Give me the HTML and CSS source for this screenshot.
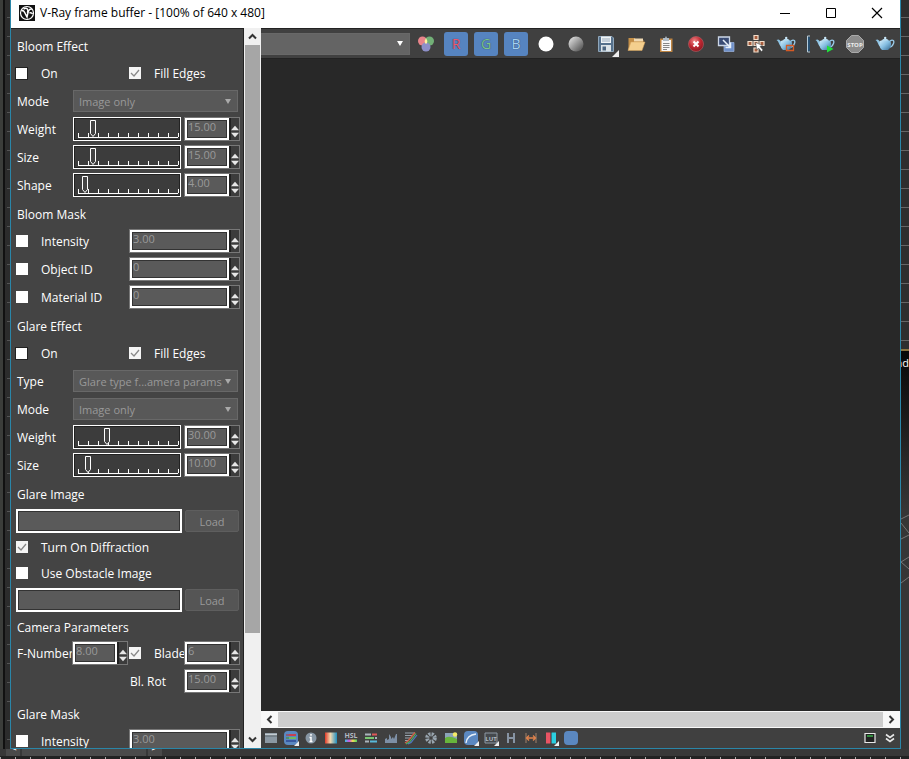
FILE: index.html
```
<!DOCTYPE html>
<html lang="en">
<head>
    <meta charset="UTF-8">
    <meta name="viewport" content="width=device-width, initial-scale=1.0">
    <title>V-Ray frame buffer</title>
    <link rel="stylesheet" href="styles.css">
</head>
<body>
    <!-- Shared symbols -->
    <svg class="symbols" aria-hidden="true">
        <defs>
            <linearGradient id="pot" x1="0" y1="0" x2="1" y2="1">
                <stop offset="0" stop-color="#d8f0fc"/>
                <stop offset="0.5" stop-color="#86bfe2"/>
                <stop offset="1" stop-color="#35688f"/>
            </linearGradient>
            <linearGradient id="ball" x1="0" y1="0" x2="1" y2="1">
                <stop offset="0.2" stop-color="#666"/>
                <stop offset="0.5" stop-color="#999"/>
                <stop offset="1" stop-color="#eee"/>
            </linearGradient>
            <linearGradient id="heat">
                <stop offset="0" stop-color="#e03a28"/>
                <stop offset="0.45" stop-color="#f0d8b0"/>
                <stop offset="1" stop-color="#1f8fc0"/>
            </linearGradient>
            <linearGradient id="rainbow">
                <stop offset="0" stop-color="#30c8e0"/>
                <stop offset="0.35" stop-color="#d050e0"/>
                <stop offset="0.65" stop-color="#f0e050"/>
                <stop offset="1" stop-color="#50d060"/>
            </linearGradient>
            <radialGradient id="redball" cx="0.4" cy="0.3" r="0.8">
                <stop offset="0" stop-color="#e88"/>
                <stop offset="0.5" stop-color="#c02832"/>
                <stop offset="1" stop-color="#7c141c"/>
            </radialGradient>
        </defs>
        <symbol id="teapot" viewBox="0 0 20 16">
            <path d="M15 5c3-2 4.500 0 3.500 2.500S15.500 11 14.500 11" fill="none" stroke="#9accea" stroke-width="1.300"/>
            <path d="M6 10.500C3 10.500 3.500 6 0.500 4L2.500 3.500C5 4.500 5 6.500 6.500 6.500z" fill="#8fc4e4"/>
            <path d="M5 5Q10 2.500 15.500 5Q17.500 11 13 14h-6Q3 11 5 5z" fill="url(#pot)"/>
            <path d="M7 4Q10 1.500 13.500 4Q10 5.500 7 4z" fill="#b8dcf0"/>
            <circle cx="10.200" cy="2" r="1.200" fill="#c8e6f6"/>
        </symbol>
        <symbol id="up" viewBox="0 0 9 6"><path d="M0 5.500L4.500 0.500L9 5.500z" fill="#e6e6e6"/></symbol>
        <symbol id="down" viewBox="0 0 9 6"><path d="M0 0.500L4.500 5.500L9 0.500z" fill="#e6e6e6"/></symbol>
        <symbol id="chevron" viewBox="0 0 9 9"><path d="M1 6.500L4.500 3L8 6.500" fill="none" stroke="#333" stroke-width="2"/></symbol>
    </svg>

    <div class="backdrop-left"></div>

    <main class="window">
        <header class="titlebar">
            <svg class="app-icon" viewBox="0 0 16 16">
                <rect width="16" height="16" fill="#111"/>
                <circle cx="8" cy="8" r="6.500" fill="none" stroke="#fff" stroke-width="1.200"/>
                <path d="M2.500 6C4.500 4.500 5.500 7 8 12C9 7 9.500 3.500 13 4M4.500 4C8 2 9.500 4 8.500 8M10.500 8C12 7.500 13 8 13.500 9" fill="none" stroke="#fff" stroke-width="1.500"/>
            </svg>
            <h1>V-Ray frame buffer - [100% of 640 x 480]</h1>
            <div class="window-buttons">
                <button aria-label="Minimize"><svg viewBox="0 0 12 12"><path d="M1 6.500h10" stroke="#000"/></svg></button>
                <button aria-label="Maximize"><svg viewBox="0 0 12 12"><path d="M1.500 1.500h9v9h-9z" fill="none" stroke="#000"/></svg></button>
                <button aria-label="Close"><svg viewBox="0 0 12 12"><path d="M1 1l10 10M11 1L1 11" stroke="#000" stroke-width="1.200"/></svg></button>
            </div>
        </header>

        <div class="content">
            <aside class="settings">
                <h2>Bloom Effect</h2>
                <div class="row checks">
                    <input type="checkbox" id="bloom-on" class="small"><label for="bloom-on">On</label>
                    <input type="checkbox" id="bloom-fill" checked><label for="bloom-fill">Fill Edges</label>
                </div>
                <div class="row">
                    <label for="bloom-mode">Mode</label>
                    <select id="bloom-mode" disabled><option>Image only</option></select>
                </div>
                <div class="row">
                    <label for="bloom-weight">Weight</label>
                    <input type="range" aria-label="Weight slider" value="15">
                    <div class="spin"><input type="text" id="bloom-weight" value="15.00"><div class="arrows"><button aria-label="Up"><svg><use href="#up"/></svg></button><button aria-label="Down"><svg><use href="#down"/></svg></button></div></div>
                </div>
                <div class="row">
                    <label for="bloom-size">Size</label>
                    <input type="range" aria-label="Size slider" value="15">
                    <div class="spin"><input type="text" id="bloom-size" value="15.00"><div class="arrows"><button aria-label="Up"><svg><use href="#up"/></svg></button><button aria-label="Down"><svg><use href="#down"/></svg></button></div></div>
                </div>
                <div class="row">
                    <label for="bloom-shape">Shape</label>
                    <input type="range" aria-label="Shape slider" value="7">
                    <div class="spin"><input type="text" id="bloom-shape" value="4.00"><div class="arrows"><button aria-label="Up"><svg><use href="#up"/></svg></button><button aria-label="Down"><svg><use href="#down"/></svg></button></div></div>
                </div>

                <h2>Bloom Mask</h2>
                <div class="row mask">
                    <input type="checkbox" id="bm-int"><label for="bm-int">Intensity</label>
                    <div class="spin"><input type="text" aria-label="Intensity" value="3.00"><div class="arrows"><button aria-label="Up"><svg><use href="#up"/></svg></button><button aria-label="Down"><svg><use href="#down"/></svg></button></div></div>
                </div>
                <div class="row mask">
                    <input type="checkbox" id="bm-obj"><label for="bm-obj">Object ID</label>
                    <div class="spin"><input type="text" aria-label="Object ID" value="0"><div class="arrows"><button aria-label="Up"><svg><use href="#up"/></svg></button><button aria-label="Down"><svg><use href="#down"/></svg></button></div></div>
                </div>
                <div class="row mask">
                    <input type="checkbox" id="bm-mat"><label for="bm-mat">Material ID</label>
                    <div class="spin"><input type="text" aria-label="Material ID" value="0"><div class="arrows"><button aria-label="Up"><svg><use href="#up"/></svg></button><button aria-label="Down"><svg><use href="#down"/></svg></button></div></div>
                </div>

                <h2>Glare Effect</h2>
                <div class="row checks">
                    <input type="checkbox" id="glare-on" class="small"><label for="glare-on">On</label>
                    <input type="checkbox" id="glare-fill" checked><label for="glare-fill">Fill Edges</label>
                </div>
                <div class="row">
                    <label for="glare-type">Type</label>
                    <select id="glare-type" disabled><option>Glare type f...amera params</option></select>
                </div>
                <div class="row">
                    <label for="glare-mode">Mode</label>
                    <select id="glare-mode" disabled><option>Image only</option></select>
                </div>
                <div class="row">
                    <label for="glare-weight">Weight</label>
                    <input type="range" aria-label="Weight slider" value="30">
                    <div class="spin"><input type="text" id="glare-weight" value="30.00"><div class="arrows"><button aria-label="Up"><svg><use href="#up"/></svg></button><button aria-label="Down"><svg><use href="#down"/></svg></button></div></div>
                </div>
                <div class="row">
                    <label for="glare-size">Size</label>
                    <input type="range" aria-label="Size slider" value="10">
                    <div class="spin"><input type="text" id="glare-size" value="10.00"><div class="arrows"><button aria-label="Up"><svg><use href="#up"/></svg></button><button aria-label="Down"><svg><use href="#down"/></svg></button></div></div>
                </div>

                <h2>Glare Image</h2>
                <div class="row file">
                    <input type="text" aria-label="Glare image file">
                    <button class="load" disabled>Load</button>
                </div>
                <div class="row option">
                    <input type="checkbox" id="diffraction" checked><label for="diffraction">Turn On Diffraction</label>
                </div>
                <div class="row option">
                    <input type="checkbox" id="obstacle"><label for="obstacle">Use Obstacle Image</label>
                </div>
                <div class="row file">
                    <input type="text" aria-label="Obstacle image file">
                    <button class="load" disabled>Load</button>
                </div>

                <h2 class="camera">Camera Parameters</h2>
                <div class="row aperture">
                    <label for="fnumber">F-Number</label>
                    <div class="spin"><input type="text" id="fnumber" value="8.00"><div class="arrows"><button aria-label="Up"><svg><use href="#up"/></svg></button><button aria-label="Down"><svg><use href="#down"/></svg></button></div></div>
                    <div class="blade">
                        <input type="checkbox" id="blade" checked><label for="blade">Blade</label>
                    </div>
                    <div class="spin"><input type="text" aria-label="Blades" value="6"><div class="arrows"><button aria-label="Up"><svg><use href="#up"/></svg></button><button aria-label="Down"><svg><use href="#down"/></svg></button></div></div>
                </div>
                <div class="row rotation">
                    <label for="blrot">Bl. Rot</label>
                    <div class="spin"><input type="text" id="blrot" value="15.00"><div class="arrows"><button aria-label="Up"><svg><use href="#up"/></svg></button><button aria-label="Down"><svg><use href="#down"/></svg></button></div></div>
                </div>

                <h2 class="glare-mask">Glare Mask</h2>
                <div class="row mask">
                    <input type="checkbox" id="gm-int"><label for="gm-int">Intensity</label>
                    <div class="spin"><input type="text" aria-label="Intensity" value="3.00"><div class="arrows"><button aria-label="Up"><svg><use href="#up"/></svg></button><button aria-label="Down"><svg><use href="#down"/></svg></button></div></div>
                </div>
            </aside>

            <div class="vscroll">
                <button aria-label="Scroll up"><svg><use href="#chevron"/></svg></button>
                <div class="thumb"></div>
                <div class="rest"></div>
                <button class="flip" aria-label="Scroll down"><svg><use href="#chevron"/></svg></button>
            </div>

            <section class="viewer">
                <div class="toolbar">
                    <select aria-label="Channel"><option></option></select>
                    <button aria-label="RGB channels"><svg viewBox="0 0 20 20"><circle cx="6.500" cy="7" r="4.500" fill="#e8848a"/><circle cx="13.500" cy="7" r="4.500" fill="#72b077"/><circle cx="10" cy="13" r="4.500" fill="#8d8fc8"/><path d="M10 4q2 3 1 5l-1 1-1-1q-1-2 1-5z" fill="#fff2a0"/></svg></button>
                    <button class="channel red">R</button>
                    <button class="channel green">G</button>
                    <button class="channel blue">B</button>
                    <button aria-label="Alpha"><svg viewBox="0 0 20 20"><circle cx="10" cy="10" r="7.500" fill="#fff"/></svg></button>
                    <button aria-label="Mono"><svg viewBox="0 0 20 20"><circle cx="10" cy="10" r="7.500" fill="url(#ball)" transform="rotate(180 10 10)"/></svg></button>
                    <button class="more" aria-label="Save"><svg viewBox="0 0 20 20"><path d="M2.500 2.500h13.500l1.500 1.500v13.500h-15z" fill="#56718c" stroke="#8fa6ba"/><path d="M5 2.500h10v6.500H5z" fill="#f0f4f6"/><path d="M5 11h10v6.500H5z" fill="#dde4e8"/><path d="M6.500 12.500h3.500v4H6.500z" fill="#4d6680"/><path d="M6 5h8M6 7h8" stroke="#9ab"/></svg></button>
                    <button aria-label="Open"><svg viewBox="0 0 20 20"><path d="M2.500 16V4h6l2 2h7v4" fill="#c48f48"/><path d="M8 4.500h9v3H8z" fill="#f0dab4"/><path d="M2 16.500L5 8h14l-3 8.500z" fill="#f4cf8e" stroke="#d8a45c" stroke-width="0.500"/></svg></button>
                    <button aria-label="Copy"><svg viewBox="0 0 20 20"><path d="M4 4.500h12.500V18H4z" fill="#bd8443"/><path d="M5.500 6h9.500v11H5.500z" fill="#f8f8f8"/><path d="M7 4h2l1-2 1 2h2v3H7z" fill="#aebbc6"/><path d="M7 9.500h6.500M7 11.500h6.500M7 13.500h6.500M7 15.500h4" stroke="#888"/></svg></button>
                    <button aria-label="Clear"><svg viewBox="0 0 20 20"><circle cx="10" cy="10" r="7.500" fill="url(#redball)" stroke="#c86a70" stroke-width="0.500"/><path d="M7.500 7.500l5 5M12.500 7.500l-5 5" stroke="#fff" stroke-width="2"/></svg></button>
                    <button aria-label="Duplicate"><svg viewBox="0 0 20 20"><path d="M8 8.500h10v9H8z" fill="#6f90c8" stroke="#9db4dc" stroke-width="0.700"/><path d="M2.500 3h11v8.500h-11z" fill="#3a4c74" stroke="#cbd6e6" stroke-width="1.300"/><path d="M7 6l7 7M14.500 8.500v5h-5" fill="none" stroke="#e8f0fa" stroke-width="1.500"/></svg></button>
                    <button aria-label="Track mouse"><svg viewBox="0 0 20 20"><g fill="#a85c3c" stroke="#f2ddca" stroke-width="1.200"><path d="M8 1.500h4v4H8zM8 7.500h4v4H8zM8 14h4v4H8zM2 7.500h4v4H2zM14 7.500h4v4h-4z"/></g><path d="M9.500 8.500l7 3-2.500 1 3 3.500-1.500 1.500-3-3.500-1.500 2z" fill="#fff" stroke="#444" stroke-width="0.500"/></svg></button>
                    <button aria-label="Region render"><svg viewBox="0 0 20 20"><use href="#teapot" x="0" y="2" width="20" height="16"/><path d="M10.500 11.500h7v5h-7z" fill="none" stroke="#d65a24" stroke-width="1.300"/></svg></button>
                    <svg class="divider" viewBox="0 0 9 20"><path d="M9 2H6.500v16H9" fill="none" stroke="#b4ccdc"/><path d="M8 3v14" stroke="#284f70" stroke-width="2"/></svg>
                    <button aria-label="Render last"><svg viewBox="0 0 20 20"><use href="#teapot" x="0" y="2" width="20" height="16"/><path d="M12 11.500l6.500 3.500-6.500 3.500z" fill="#1fe03c"/></svg></button>
                    <button aria-label="Stop"><svg viewBox="0 0 20 20"><path d="M6.500 1.500h7l5 5v7l-5 5h-7l-5-5v-7z" fill="#8c8c8c" stroke="#aaa"/><text x="10" y="12.500" class="stop-text">STOP</text></svg></button>
                    <button aria-label="Render"><svg viewBox="0 0 20 20"><use href="#teapot" x="0" y="2" width="20" height="16"/></svg></button>
                </div>

                <div class="canvas"></div>

                <div class="hscroll">
                    <button class="left" aria-label="Scroll left"><svg><use href="#chevron"/></svg></button>
                    <div class="thumb"></div>
                    <button class="right" aria-label="Scroll right"><svg><use href="#chevron"/></svg></button>
                </div>

                <div class="statusbar">
                    <button aria-label="Corrections panel"><svg viewBox="0 0 16 16"><path d="M2 3h12v10H2z" fill="#8b98a3"/><path d="M2 4.500h12" stroke="#c4ccd2" stroke-width="1.500"/><path d="M2 6h12" stroke="#5c666e"/></svg></button>
                    <button class="more" aria-label="Force color clamping"><svg viewBox="0 0 16 16"><rect x="1" y="1" width="14" height="14" rx="4" fill="#5b88c0"/><path d="M3 5h4" stroke="#8a5a78" stroke-width="2"/><path d="M3 8h4" stroke="#508a70" stroke-width="2"/><path d="M3 11h4" stroke="#3858a0" stroke-width="2"/><path d="M6 5h7" stroke="#c84050" stroke-width="2"/><path d="M6 8h7" stroke="#70b860" stroke-width="2"/><path d="M6 11h7" stroke="#3858a0" stroke-width="2"/></svg></button>
                    <button aria-label="Pixel info"><svg viewBox="0 0 16 16"><circle cx="8" cy="8" r="5.500" fill="#8796a4"/><path d="M8 4v1.800M6.500 7.500H8v4M6.500 11.500h3" stroke="#fff" stroke-width="1.500" fill="none"/></svg></button>
                    <button aria-label="White balance"><svg viewBox="0 0 16 16"><path d="M2 2.500h12v11H2z" fill="url(#heat)"/></svg></button>
                    <button aria-label="Hue and saturation"><svg viewBox="0 0 16 16"><text x="8" y="8" class="icon-text hsl">HSL</text><path d="M2 9.500h12v2.500H2z" fill="url(#rainbow)"/></svg></button>
                    <button aria-label="Color balance"><svg viewBox="0 0 16 16"><path d="M2 4.500h6M12 8h2M2 11.500h4" stroke="#aab4bc" stroke-width="2"/><path d="M9 4.500h5" stroke="#e05858" stroke-width="2"/><path d="M2 8h9" stroke="#78c872" stroke-width="2"/><path d="M7 11.500h7" stroke="#58b8d8" stroke-width="2"/></svg></button>
                    <button aria-label="Levels"><svg viewBox="0 0 16 16"><path d="M2 13V9l2-1v2l2-1V4l2 3v2l2-2 1 2 2-5h1v9z" fill="#7d8fa5"/></svg></button>
                    <button aria-label="Curve"><svg viewBox="0 0 16 16"><path d="M2 3h10M2 5.500h8M2 8h6M2 10.500h4" stroke="#99a4ae"/><path d="M2 13L5 11L12 2.500" fill="none" stroke="#d06048" stroke-width="1.400"/><path d="M3 14L7 11.500L13 3.500" fill="none" stroke="#50b060" stroke-width="1.200"/><path d="M5 14L8 12.500L14 5" fill="none" stroke="#5078c8" stroke-width="1.200"/></svg></button>
                    <button aria-label="Exposure"><svg viewBox="0 0 16 16"><circle cx="8" cy="8" r="3.800" fill="none" stroke="#98a4ae" stroke-width="4" stroke-dasharray="2 1"/></svg></button>
                    <button aria-label="Background"><svg viewBox="0 0 16 16"><path d="M2 3h12v10H2z" fill="#8ba3b8"/><path d="M2 8q4-3 12 1v4H2z" fill="#67b43c"/><circle cx="12" cy="4.500" r="2.200" fill="#f4ea68"/></svg></button>
                    <button class="more" aria-label="sRGB"><svg viewBox="0 0 16 16"><rect x="1" y="1" width="14" height="14" rx="4" fill="#5b88c0"/><path d="M3 13Q4 5 13 4" fill="none" stroke="#e8f0f8" stroke-width="1.400"/></svg></button>
                    <button class="more" aria-label="Look-up table"><svg viewBox="0 0 16 16"><path d="M2 3h12v10H2z" fill="#45494d" stroke="#8d99a4"/><text x="8" y="10.500" class="icon-text lut">LUT</text></svg></button>
                    <button aria-label="History"><svg viewBox="0 0 16 16"><path d="M5 3v10M11 3v10M5 8h6" stroke="#8794a3" stroke-width="2"/></svg></button>
                    <button aria-label="Pixel aspect"><svg viewBox="0 0 16 16"><path d="M3 3v10M13 3v10" stroke="#a08068"/><path d="M4 8h8M6 5.500L3.500 8L6 10.500M10 5.500L12.500 8L10 10.500" fill="none" stroke="#e0824c" stroke-width="1.300"/></svg></button>
                    <button class="more" aria-label="Stereo"><svg viewBox="0 0 16 16"><path d="M3 2.500h5v11H3z" fill="#e85464"/><path d="M8 2.500h5v11H8z" fill="#2ccfe0"/><path d="M8 2v12" stroke="#333"/></svg></button>
                    <button aria-label="Lens effects"><svg viewBox="0 0 16 16"><rect x="1" y="1" width="14" height="14" rx="4" fill="#5b88c0"/></svg></button>
                    <button class="push" aria-label="Dock"><svg viewBox="0 0 16 16"><path d="M3 3.500h10v9H3z" fill="#222" stroke="#e8e8e8" stroke-width="1.200"/><path d="M5 6h6" stroke="#38b048" stroke-width="1.500"/></svg></button>
                    <button aria-label="Collapse"><svg viewBox="0 0 16 16"><path d="M4 4.500l4 3 4-3M4 8.500l4 3 4-3" fill="none" stroke="#e8e8e8" stroke-width="1.600"/></svg></button>
                </div>
            </section>
        </div>
    </main>

    <div class="backdrop-right">
        <div class="tracks"></div>
        <div class="viewport">
            <span>nd</span>
            <svg viewBox="0 0 8 80"><path d="M0 8L8 4M0 12L8 22M0 28L8 24M0 51L8 46M0 51L8 58M0 72L8 66" fill="none" stroke="#777"/></svg>
        </div>
    </div>

    <footer class="timeline">
        <div class="frames"><button>&lt;</button><span>0 / 100</span><button>&gt;</button></div>
        <div class="ticks"></div>
    </footer>
</body>
</html>
```
FILE: styles.css
```
* {
    box-sizing: border-box;
}
body {
    margin: 0;
    height: 100vh;
    overflow: hidden;
    display: grid;
    grid-template-columns: 10px minmax(0, 1fr) 8px;
    grid-template-rows: minmax(0, 1fr) 10px;
    background-color: #2c2c2c;
    color: #fff;
    font-family: "Open Sans", "Noto Sans", sans-serif;
    font-size: 12px;
}
button, input, select {
    margin: 0;
    font-family: inherit;
    border-radius: 0;
}
button {
    padding: 0;
    border: none;
    background: none;
    color: inherit;
    display: flex;
    align-items: center;
    justify-content: center;
}
.symbols {
    position: absolute;
    width: 0;
    height: 0;
}

/* Application behind the window */
.backdrop-left {
    background: repeating-linear-gradient(to bottom, transparent 0 17px, #555 17px 18px, transparent 18px 19px) right / 3px 100% no-repeat,
        linear-gradient(to right, #3b3d3a 0 3px, #111 3px 5px, #2c2c2c 5px);
}
.backdrop-right {
    display: flex;
    flex-direction: column;
    overflow: hidden;
}
.tracks {
    height: 349px;
    background: repeating-linear-gradient(to bottom, #2e2e2e 0 17px, #666 17px 18px, #2e2e2e 18px 19px);
}
.viewport {
    flex: 1;
    border-top: 2px solid #8a7440;
    background: linear-gradient(to bottom, #080808, #363636 40%);
}
.viewport span {
    display: flex;
    justify-content: flex-end;
    height: 160px;
    padding-top: 4px;
    font-size: 11px;
}
.viewport svg {
    display: block;
    width: 8px;
    height: 80px;
}
.timeline {
    grid-column: 1 / -1;
    display: flex;
    flex-direction: column;
    justify-content: flex-end;
    overflow: hidden;
    background-color: #383838;
}
.frames {
    display: flex;
    gap: 2px;
    padding-left: 6px;
    font-size: 11px;
    line-height: 12px;
}
.frames span {
    width: 124px;
    background-color: #4a4a4a;
    text-align: center;
}
.frames button {
    width: 14px;
    background-color: #4a4a4a;
}
.ticks {
    flex: none;
    height: 3px;
    background: repeating-linear-gradient(to right, #aaa 0 1px, #222 1px 15px);
    border-top: 1px solid #222;
}

/* Window frame */
.window {
    display: flex;
    flex-direction: column;
    border: 1px solid #2a86a8;
    border-top: none;
    background-color: #444;
}
.titlebar {
    display: flex;
    align-items: center;
    height: 28px;
    padding: 0 0 3px 8px;
    background-color: #fff;
    color: #000;
}
.app-icon {
    width: 16px;
    height: 16px;
}
.titlebar h1 {
    flex: 1;
    margin: 0 0 0 5px;
    font-size: 12px;
    font-weight: normal;
}
.window-buttons {
    display: flex;
}
.window-buttons button {
    width: 46px;
    height: 24px;
}
.window-buttons svg {
    width: 12px;
    height: 12px;
}
.content {
    flex: 1;
    min-height: 0;
    display: flex;
}

/* Settings panel */
.settings {
    flex: none;
    width: 233px;
    padding: 4px 3px 0 5px;
    overflow: hidden;
    border-top: 1px solid #222;
    border-right: 1px solid #222;
}
.settings h2 {
    margin: 0;
    padding-left: 1px;
    font-size: 12px;
    font-weight: normal;
    line-height: 28px;
}
.settings h2.camera {
    line-height: 26px;
}
.settings h2.glare-mask {
    margin-top: 4px;
}
.row {
    display: grid;
    grid-template-columns: 57px 1fr 56px;
    align-items: center;
    height: 28px;
    padding-bottom: 4px;
}
.row label {
    padding-left: 1px;
    overflow: hidden;
    white-space: nowrap;
}
.row.checks {
    grid-template-columns: 24px 89px 24px 1fr;
}
.row.mask {
    grid-template-columns: 24px 89px 1fr;
}
.row.file {
    grid-template-columns: 1fr 54px;
    gap: 3px;
    height: 27px;
    padding-right: 1px;
}
.row.option {
    grid-template-columns: 24px 1fr;
    height: 26px;
}
.row.aperture {
    grid-template-columns: 56px 56px 1fr 56px;
}
.row.rotation {
    grid-template-columns: 1fr 56px;
    padding-left: 113px;
}
.blade {
    display: grid;
    grid-template-columns: 24px 1fr;
    align-items: center;
    padding-left: 1px;
}
.row select {
    grid-column: 2 / -1;
    margin-right: 2px;
}
select {
    appearance: none;
    height: 22px;
    padding: 0 5px;
    border: 1px solid #686868;
    background: #585858 url("data:image/svg+xml,%3Csvg xmlns='http://www.w3.org/2000/svg' width='6' height='5'%3E%3Cpath d='M0 0h6L3 5z' fill='%23aaa'/%3E%3C/svg%3E") right 6px center no-repeat;
    color: #999;
    font-size: 11px;
}
select:disabled {
    opacity: 1;
}
input[type="checkbox"] {
    appearance: none;
    width: 12px;
    height: 12px;
    background-color: #fff;
}
input[type="checkbox"].small {
    width: 11px;
    height: 11px;
    outline: 1px solid #222;
}
input[type="checkbox"]:checked {
    background: #f4f4f4 url("data:image/svg+xml,%3Csvg xmlns='http://www.w3.org/2000/svg' width='12' height='12'%3E%3Cpath d='M2 6l3 3 5-6' fill='none' stroke='%23888' stroke-width='1.300'/%3E%3C/svg%3E");
}
/* Slider with eleven ticks along the bottom edge */
input[type="range"] {
    appearance: none;
    width: 108px;
    height: 24px;
    border: 1px solid #fff;
    background: linear-gradient(#fff, #fff) 4px 19px / 100px 1px no-repeat,
        repeating-linear-gradient(to right, #fff 0 1px, transparent 1px 10px) 4px 15px / 101px 4px no-repeat,
        #3c3c3c;
    box-shadow: inset 0 0 0 1px #222;
}
input[type="range"]::-webkit-slider-thumb {
    appearance: none;
    width: 8px;
    height: 18px;
    background: url("data:image/svg+xml,%3Csvg xmlns='http://www.w3.org/2000/svg' width='8' height='18'%3E%3Cpath d='M1.500 0.500h5v13l-2.500 3-2.500-3z' fill='%23444' stroke='white'/%3E%3C/svg%3E") no-repeat;
}
.spin {
    display: flex;
    height: 24px;
    border: 1px solid #777;
}
input[type="text"] {
    flex: 1;
    min-width: 0;
    width: 100%;
    padding: 0 0 5px 1px;
    border: 2px solid #fff;
    background-color: #5a5a5a;
    box-shadow: inset 0 0 0 1px #333;
    color: #999;
    font-size: 11px;
    line-height: 14px;
}
.arrows {
    width: 10px;
    display: flex;
    flex-direction: column;
    justify-content: flex-end;
    gap: 1px;
    padding-bottom: 2px;
    border-left: 2px solid #222;
    background-color: #3c3c3c;
}
.arrows svg {
    width: 8px;
    height: 6px;
}
.file input[type="text"] {
    height: 24px;
}
.load {
    height: 22px;
    border: 1px solid #5e5e5e;
    border-radius: 2px;
    background-color: #555;
    color: #999;
    font-size: 11px;
}

/* Scroll bars */
.vscroll {
    flex: none;
    width: 17px;
    display: flex;
    flex-direction: column;
    background-color: #f0f0f0;
}
.vscroll button, .hscroll button {
    width: 17px;
    height: 17px;
    flex: none;
}
.vscroll svg, .hscroll svg {
    width: 9px;
    height: 9px;
}
.vscroll .thumb {
    flex: 6;
    margin: 0 1px;
    background-color: #a6a6a6;
}
.vscroll .rest {
    flex: 1;
}
.flip svg {
    transform: rotate(180deg);
}
.left svg {
    transform: rotate(-90deg);
}
.right svg {
    transform: rotate(90deg);
}
.hscroll {
    display: flex;
    height: 17px;
    background-color: #f8f8f8;
}
.hscroll .thumb {
    flex: 1;
    margin: 1px 0;
    background-color: #cdcdcd;
}

/* Viewer */
.viewer {
    flex: 1;
    min-width: 0;
    display: flex;
    flex-direction: column;
}
.toolbar {
    display: flex;
    align-items: center;
    height: 30px;
    border-top: 1px solid #222;
    background-color: #404040;
}
.toolbar select {
    flex: 1;
    min-width: 0;
    margin-right: 1px;
    border-left: none;
    background-color: #646464;
    background-image: url("data:image/svg+xml,%3Csvg xmlns='http://www.w3.org/2000/svg' width='6' height='5'%3E%3Cpath d='M0 0h6L3 5z' fill='white'/%3E%3C/svg%3E");
}
.toolbar button {
    position: relative;
    flex: none;
    width: 30px;
    height: 28px;
}
.toolbar button svg {
    width: 20px;
    height: 20px;
}
.toolbar .channel {
    width: 24px;
    height: 24px;
    margin: 0 3px;
    border-radius: 3px;
    background-color: #5684c0;
    font-size: 14px;
    text-shadow: 0 0 1px #234;
}
.toolbar .red {
    color: #f0566c;
}
.toolbar .green {
    color: #7cc48c;
}
.toolbar .blue {
    color: #a4d0f4;
}
.toolbar .divider {
    flex: none;
    width: 9px;
    height: 20px;
}
.stop-text {
    fill: #eee;
    font-size: 6px;
    font-weight: bold;
    text-anchor: middle;
}
.canvas {
    flex: 1;
    border-top: 1px solid #222;
    background-color: #282828;
}
.statusbar {
    display: flex;
    align-items: center;
    height: 20px;
    background-color: #404040;
}
.statusbar button {
    position: relative;
    width: 20px;
    height: 20px;
}
.statusbar button svg {
    width: 16px;
    height: 16px;
}
.statusbar .push {
    margin-left: auto;
}
.icon-text {
    fill: #b0bac2;
    font-weight: bold;
    text-anchor: middle;
}
.hsl {
    font-size: 7px;
}
.lut {
    font-size: 6px;
}
/* Corner mark of a button that opens a menu */
.more::after {
    content: "";
    position: absolute;
    right: 2px;
    bottom: 2px;
    border-left: 5px solid transparent;
    border-bottom: 5px solid #eee;
}
.toolbar .more::after {
    right: 2px;
    bottom: 1px;
    border-left-width: 7px;
    border-bottom-width: 7px;
}
```
